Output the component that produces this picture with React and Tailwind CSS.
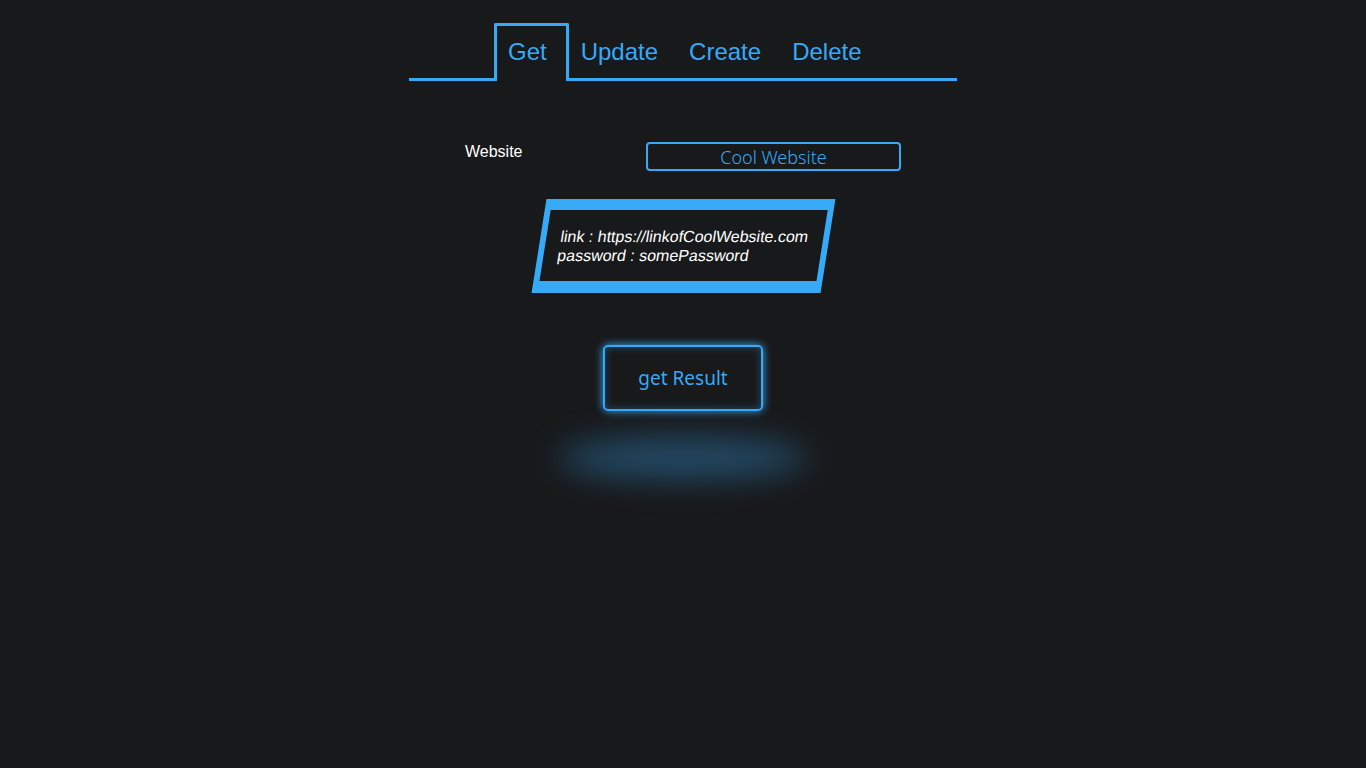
import React, { useState } from 'react';

const TABS = ['Get', 'Update', 'Create', 'Delete'];

export default function App() {
  const [active] = useState('Get');
  const [site, setSite] = useState('Cool Website');

  return (
    <div className="min-h-screen w-full bg-[#18191b] pt-[23px] font-['Liberation_Sans',Arial,sans-serif]">
      {/* tab bar */}
      <div className="w-[548px] mx-auto flex items-end">
        <div className="w-[85px] border-b-[3px] border-[#36a9f7]" />
        {TABS.map((tab, i) =>
          tab === active ? (
            <div
              key={tab}
              className="h-[58px] flex items-center border-[3px] border-b-0 border-[#36a9f7] rounded-t-[2px] pl-[11px] pr-[19px] pb-[4px] text-[24px] text-[#36a9f7]"
            >
              {tab}
            </div>
          ) : (
            <div
              key={tab}
              className={`h-[55px] flex items-center border-b-[3px] border-[#36a9f7] pr-[15px] pb-[1px] text-[24px] text-[#36a9f7] ${
                i === 1 ? 'pl-[12px]' : 'pl-[16px]'
              }`}
            >
              {tab}
            </div>
          )
        )}
        <div className="flex-1 border-b-[3px] border-[#36a9f7]" />
      </div>

      {/* form */}
      <div className="w-[436px] mx-auto mt-[61px] flex items-start justify-between">
        <label className="text-white text-[16px] leading-[18px] pt-[1px]">Website</label>
        <input
          value={site}
          onChange={(e) => setSite(e.target.value)}
          className="w-[255px] h-[29px] border-2 border-[#36a9f7] rounded-[4px] bg-transparent text-center text-[18px] text-[#36a9f7] font-['Noto_Sans',sans-serif] font-light outline-none"
        />
      </div>

      {/* result card */}
      <div className="flex justify-center mt-[28px]">
        <div className="w-[289px] h-[94px] -skew-x-[9deg] bg-[#18191b] border-[#36a9f7] border-t-[11px] border-b-[12px] border-x-[6px] flex flex-col justify-center pl-[14px] text-white text-[16px] leading-[19px]">
          <p>link : https://linkofCoolWebsite.com</p>
          <p>password : somePassword</p>
        </div>
      </div>

      {/* button */}
      <div className="flex flex-col items-center mt-[52px]">
        <button className="w-[160px] h-[66px] border-2 border-[#36a9f7] rounded-[5px] text-[#36a9f7] text-[19px] font-['Noto_Sans',sans-serif] shadow-[0_0_8px_#36a9f7,inset_0_0_8px_rgba(54,169,247,0.35)]">
          get Result
        </button>
        <div className="mt-[26px] w-[250px] h-[42px] rounded-[50%] bg-[#36a9f7]/35 blur-[16px]" />
      </div>
    </div>
  );
}
